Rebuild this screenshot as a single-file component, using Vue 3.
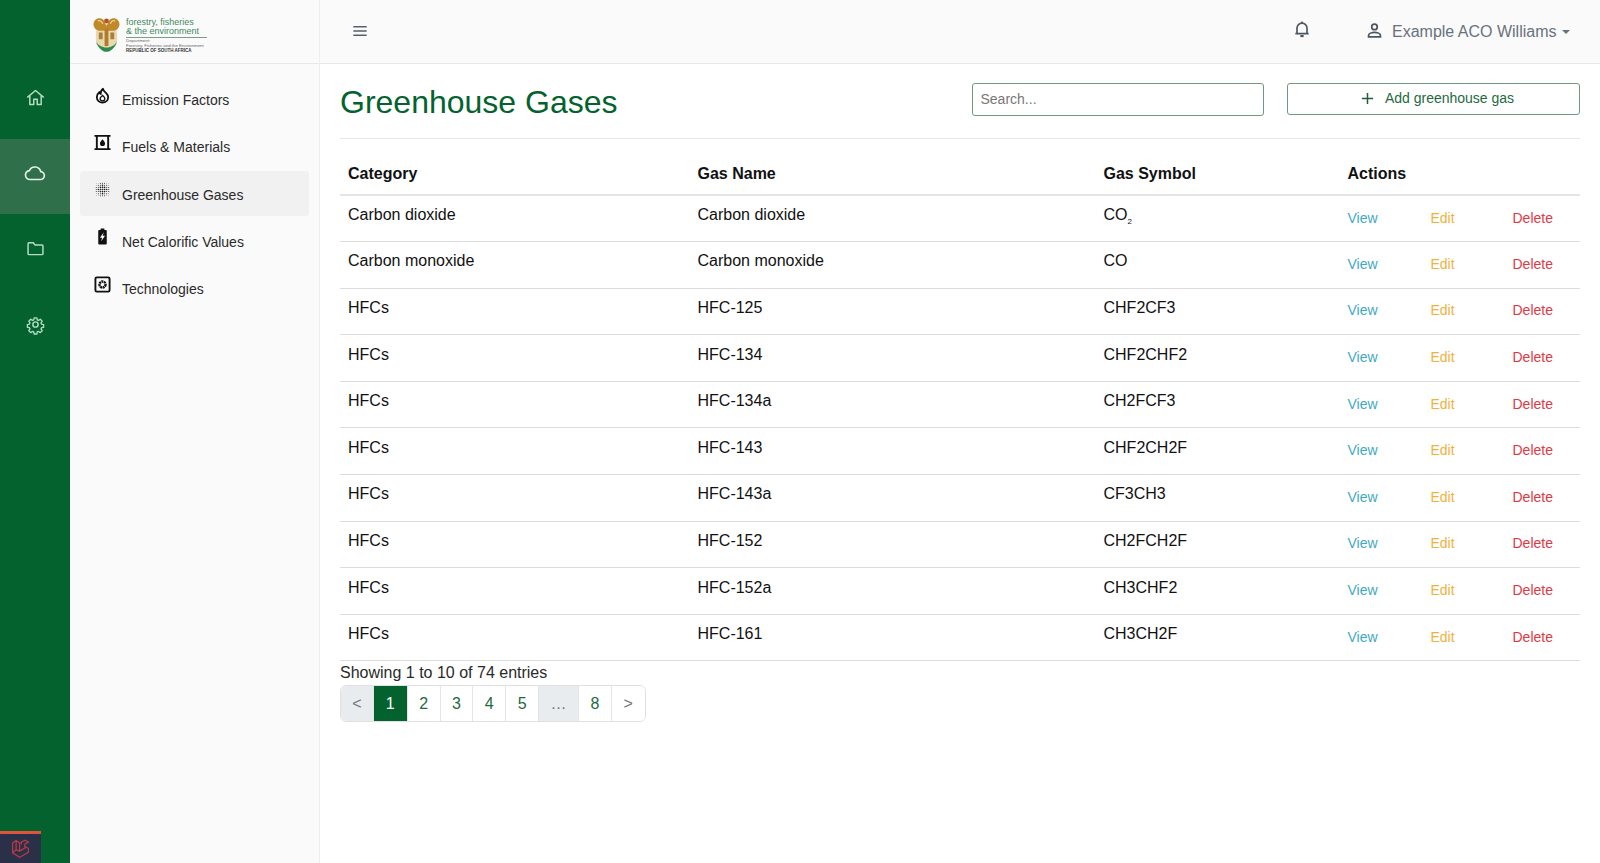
<script setup>
const railItems = [
  { name: 'home', active: false },
  { name: 'cloud', active: true },
  { name: 'folder', active: false },
  { name: 'gear', active: false }
]

const menu = [
  { label: 'Emission Factors', icon: 'flame' },
  { label: 'Fuels & Materials', icon: 'barrel' },
  { label: 'Greenhouse Gases', icon: 'dots', active: true },
  { label: 'Net Calorific Values', icon: 'battery' },
  { label: 'Technologies', icon: 'chip' }
]

const gases = [
  { category: 'Carbon dioxide', name: 'Carbon dioxide', symbol: 'CO', sub: '2' },
  { category: 'Carbon monoxide', name: 'Carbon monoxide', symbol: 'CO' },
  { category: 'HFCs', name: 'HFC-125', symbol: 'CHF2CF3' },
  { category: 'HFCs', name: 'HFC-134', symbol: 'CHF2CHF2' },
  { category: 'HFCs', name: 'HFC-134a', symbol: 'CH2FCF3' },
  { category: 'HFCs', name: 'HFC-143', symbol: 'CHF2CH2F' },
  { category: 'HFCs', name: 'HFC-143a', symbol: 'CF3CH3' },
  { category: 'HFCs', name: 'HFC-152', symbol: 'CH2FCH2F' },
  { category: 'HFCs', name: 'HFC-152a', symbol: 'CH3CHF2' },
  { category: 'HFCs', name: 'HFC-161', symbol: 'CH3CH2F' }
]

const pages = ['<', '1', '2', '3', '4', '5', '...', '8', '>']

// dot sizes for the greenhouse icon, bigger in the middle
const dots = []
for (let r = 0; r < 7; r++) {
  for (let c = 0; c < 7; c++) {
    const d = Math.abs(r - 3) + Math.abs(c - 3)
    dots.push({ x: 2.4 + c * 2.2, y: 2.4 + r * 2.2, r: d < 3 ? 0.85 : d < 5 ? 0.55 : 0.3 })
  }
}
</script>

<template>
  <div class="app">
    <aside class="rail">
      <div class="rail-top"></div>
      <a v-for="item in railItems" :key="item.name" class="rail-item" :class="{ active: item.active }">
        <svg viewBox="0 0 24 24" class="rail-icon">
          <path v-if="item.name === 'home'" d="M3 11.5 12 4l9 7.5M5.5 9.5V20h4.5v-6h4v6h4.500V9.500" />
          <path v-else-if="item.name === 'cloud'" d="M7 18.500a4.500 4.500 0 0 1-.6-8.960 6 6 0 0 1 11.300 1 3.980 3.980 0 0 1-.7 7.960z" />
          <path v-else-if="item.name === 'folder'" d="M3.500 6.500a1 1 0 0 1 1-1h5l2 2.500h8a1 1 0 0 1 1 1v9a1 1 0 0 1-1 1h-15a1 1 0 0 1-1-1z" />
          <template v-else>
            <circle cx="12" cy="12" r="3" />
            <path d="M10.300 3.500h3.400l.5 2.600 1.700.7 2.200-1.500 2.400 2.400-1.500 2.200.7 1.700 2.600.5v3.400l-2.600.5-.7 1.700 1.500 2.200-2.400 2.400-2.200-1.500-1.700.7-.5 2.600h-3.400l-.5-2.600-1.700-.7-2.200 1.500-2.400-2.400 1.500-2.200-.7-1.700-2.600-.5v-3.400l2.600-.5.7-1.700-1.500-2.200 2.400-2.400 2.200 1.500 1.700-.7z" transform="translate(1.200 1.200) scale(.9)" />
          </template>
        </svg>
      </a>
      <div class="debugbar">
        <svg viewBox="0 0 24 24" class="laravel">
          <path d="M3 5.500 7 3l4 2.500V15l6-3.500V7l4-2.300L17 2.500l-4 2.300V7M3 5.500V17l8 5 10-5.500v-4.500l-4-2.500M7 3v10.500L11 15M7 13.500 3 17" />
        </svg>
      </div>
    </aside>

    <nav class="sidebar">
      <div class="brand">
        <svg viewBox="0 0 28 38" class="crest">
          <path d="M.5 9C.5 2.500 7 0 11 4l3 6 3-6c4-4 10.500-1.500 10.500 5-1 5-4.500 6.500-7.500 7.500H8C5 15.500 1.500 14 .5 9z" fill="#c08a2a" />
          <path d="M5 5c2-1 4 0 5 3M23 5c-2-1-4 0-5 3" fill="none" stroke="#f0d58a" stroke-width="1.200" />
          <circle cx="14" cy="5" r="2.500" fill="#b5522a" />
          <path d="M3 15h22v10c0 6-6 10-11 10S3 31 3 25z" fill="#e9d9b0" />
          <path d="M12 13h4v18h-4z" fill="#b27a2c" />
          <path d="M6 17h4v7H6zM18 17h4v7h-4z" fill="#a9803a" />
          <path d="M3 26c2 7 7 11 11 11s9-4 11-11c-2 4-6 6.500-11 6.500S5 30 3 26z" fill="#2f8a4e" />
        </svg>
        <div class="brand-text">
          <div class="brand-title">forestry, fisheries<br />&amp; the environment</div>
          <div class="brand-sub">Department:<br />Forestry, Fisheries and the Environment</div>
          <div class="brand-country">REPUBLIC OF SOUTH AFRICA</div>
        </div>
      </div>
      <ul class="menu">
        <li v-for="item in menu" :key="item.label" class="menu-item" :class="{ active: item.active }">
          <svg viewBox="0 0 18 18" class="menu-icon">
            <g v-if="item.icon === 'flame'">
              <path d="M9.500 1.800c.3 2.300 1.700 3 3.200 4.500 1.500 1.500 2.300 3 2.300 4.600 0 3.300-2.700 5.500-6 5.500s-6-2.200-6-5.500c0-2.400 1.200-4.300 2.800-5.600.2 1.200.7 1.800 1.300 2.100C7 5.300 8 3 9.500 1.800z" fill="none" stroke="#111" stroke-width="1.900" stroke-linejoin="round" />
              <path d="M9 9c1.200 1.200 2.500 1.800 2.500 3.200a2.500 2.500 0 0 1-5 0C6.500 10.800 8 10.200 9 9z" fill="none" stroke="#111" stroke-width="1.400" />
            </g>
            <g v-else-if="item.icon === 'barrel'">
              <path d="M.5 1h17v2H16v12h1.500v2H.5v-2H2V3H.5zm3.500 2v12h10V3z" fill="#111" />
              <path d="M9 5.500c1.500 2 2.700 3 2.700 4.500a2.700 2.700 0 0 1-5.400 0C6.300 8.500 7.500 7.500 9 5.500z" fill="#111" />
            </g>
            <g v-else-if="item.icon === 'dots'">
              <circle v-for="(d, i) in dots" :key="i" :cx="d.x" :cy="d.y" :r="d.r" fill="#222" />
            </g>
            <g v-else-if="item.icon === 'battery'">
              <path d="M7 .5h4V2h1.500a1 1 0 0 1 1 1v13.500a1 1 0 0 1-1 1h-7a1 1 0 0 1-1-1V3a1 1 0 0 1 1-1H7z" fill="#111" />
              <path d="M10.300 4.500 6.300 10.300h2.300l-1 3.700 4.100-5.700H9.200z" fill="#fafafa" />
            </g>
            <g v-else>
              <rect x="1.500" y="1.500" width="15" height="15" rx="1.500" fill="none" stroke="#111" stroke-width="2" />
              <circle cx="9" cy="9" r="3.200" fill="none" stroke="#111" stroke-width="2.600" stroke-dasharray="2.100 .6" />
              <circle cx="9" cy="9" r=".9" fill="#fafafa" />
            </g>
          </svg>
          <span class="menu-label">{{ item.label }}</span>
        </li>
      </ul>
    </nav>

    <div class="main">
      <header class="topbar">
        <svg viewBox="0 0 24 24" class="burger"><path d="M4 7h16M4 12h16M4 17h16" /></svg>
        <div class="top-right">
          <svg viewBox="0 0 24 24" class="bell">
            <path d="M6 17V11a6 6 0 0 1 12 0v6M4 17.500h16M12 3v2" />
            <path d="M10 20.500h4" stroke-width="2.500" />
          </svg>
          <div class="user">
            <svg viewBox="0 0 24 24" class="person">
              <circle cx="12" cy="7.500" r="3.500" />
              <path d="M4.500 20v-1.500c0-2.500 4-4 7.500-4s7.500 1.500 7.500 4V20z" />
            </svg>
            <span>Example ACO Williams</span>
            <i class="caret"></i>
          </div>
        </div>
      </header>

      <section class="content">
        <div class="title-row">
          <h1>Greenhouse Gases</h1>
          <input class="search" type="text" placeholder="Search..." />
          <button class="add-btn">
            <svg viewBox="0 0 14 14" class="plus"><path d="M7 1v12M1 7h12" /></svg>
            Add greenhouse gas
          </button>
        </div>

        <table class="gas-table">
          <colgroup>
            <col class="c1" /><col class="c2" /><col class="c3" /><col class="c4" />
          </colgroup>
          <thead>
            <tr>
              <th>Category</th>
              <th>Gas Name</th>
              <th>Gas Symbol</th>
              <th>Actions</th>
            </tr>
          </thead>
          <tbody>
            <tr v-for="gas in gases" :key="gas.name">
              <td>{{ gas.category }}</td>
              <td>{{ gas.name }}</td>
              <td>{{ gas.symbol }}<sub v-if="gas.sub">{{ gas.sub }}</sub></td>
              <td>
                <div class="actions">
                  <a class="view">View</a>
                  <a class="edit">Edit</a>
                  <a class="delete">Delete</a>
                </div>
              </td>
            </tr>
          </tbody>
        </table>

        <div class="showing">Showing 1 to 10 of 74 entries</div>
        <div class="pager">
          <span
            v-for="p in pages"
            :key="p"
            class="page"
            :class="{ current: p === '1', muted: p === '<' || p === '...', dots: p === '...', arrow: p === '<' || p === '>' }"
          >{{ p === '...' ? '…' : p }}</span>
        </div>
      </section>
    </div>
  </div>
</template>

<style>
html, body {
  margin: 0;
  background: #fff;
}
</style>

<style scoped>
.app {
  display: flex;
  height: 863px;
  overflow: hidden;
  font-family: "Liberation Sans", Arial, sans-serif;
  color: #111;
}

.rail {
  position: relative;
  width: 70px;
  flex-shrink: 0;
  background: #04622f;
}
.rail-top {
  height: 63px;
}
.rail-item {
  display: flex;
  align-items: center;
  justify-content: center;
  height: 75.5px;
  box-sizing: border-box;
  padding-bottom: 6px;
}
.rail-item.active {
  background: #2f6f49;
}
.rail-icon {
  width: 21px;
  height: 21px;
  fill: none;
  stroke: #b5dcc2;
  stroke-width: 1.7;
  stroke-linejoin: round;
  stroke-linecap: round;
}
.rail-item.active .rail-icon {
  width: 24px;
  height: 24px;
  stroke: #e4f2e8;
}
.debugbar {
  position: absolute;
  left: 0;
  bottom: 0;
  width: 41px;
  height: 32px;
  box-sizing: border-box;
  background: #2a3048;
  border-top: 3px solid #e0533a;
  display: flex;
  align-items: center;
  justify-content: center;
}
.laravel {
  width: 21px;
  height: 21px;
  fill: none;
  stroke: #b23a48;
  stroke-width: 1.5;
}

.sidebar {
  width: 250px;
  flex-shrink: 0;
  background: #fafafa;
  border-right: 1px solid #eee;
  box-sizing: border-box;
}
.brand {
  height: 64px;
  box-sizing: border-box;
  border-bottom: 1px solid #e8e8e8;
  padding: 16px 0 0 23px;
  display: flex;
  gap: 6px;
}
.crest {
  width: 27px;
  height: 37px;
}
.brand-text {
  width: 81px;
  line-height: 1;
  padding-top: 2px;
}
.brand-title {
  font-size: 9px;
  line-height: 8.500px;
  color: #3f8a5f;
  white-space: nowrap;
  padding-bottom: 2px;
  border-bottom: 1px solid #7e9c8a;
}
.brand-sub {
  font-size: 4.400px;
  line-height: 5px;
  color: #666;
  white-space: nowrap;
}
.brand-country {
  font-size: 4.500px;
  line-height: 5px;
  font-weight: 700;
  color: #333;
  white-space: nowrap;
}
.menu {
  list-style: none;
  margin: 0;
  padding: 12.500px 10px 0;
}
.menu-item {
  display: flex;
  height: 44.500px;
  margin-bottom: 2.800px;
  padding: 0 0 0 14px;
  gap: 11px;
  border-radius: 3px;
}
.menu-item.active {
  background: #f1f1f1;
}
.menu-icon {
  width: 17px;
  height: 17px;
  margin-top: 10px;
  flex-shrink: 0;
}
.menu-label {
  font-size: 14px;
  line-height: 44px;
  color: #2a2a2a;
  margin-top: 1.500px;
}

.main {
  flex: 1;
  min-width: 0;
}
.topbar {
  height: 64px;
  box-sizing: border-box;
  background: #fafafa;
  border-bottom: 1px solid #e8e8e8;
  display: flex;
  align-items: center;
  justify-content: space-between;
  padding: 0 30px 0 30px;
}
.burger {
  width: 20px;
  height: 20px;
  fill: none;
  stroke: #55606a;
  stroke-width: 1.800;
  margin-top: -2px;
}
.top-right {
  display: flex;
  align-items: center;
  gap: 53px;
}
.bell {
  width: 20px;
  height: 20px;
  fill: none;
  stroke: #4c5560;
  stroke-width: 2;
  margin-top: -5px;
}
.user {
  display: flex;
  align-items: center;
  gap: 8px;
  font-size: 16px;
  color: #69727c;
}
.person {
  width: 19px;
  height: 19px;
  fill: none;
  stroke: #4c5560;
  stroke-width: 2.200;
  margin-top: -2px;
}
.caret {
  width: 0;
  height: 0;
  border-left: 4.500px solid transparent;
  border-right: 4.500px solid transparent;
  border-top: 4.500px solid #69727c;
  margin-left: -2.500px;
}

.content {
  padding: 19px 20px 0;
}
.title-row {
  display: flex;
  align-items: flex-start;
  height: 55px;
  border-bottom: 1px solid #e6e6e6;
}
h1 {
  margin: 0;
  flex: 1;
  font-size: 32px;
  font-weight: 400;
  line-height: 39px;
  color: #04622f;
}
.search {
  width: 292px;
  height: 33px;
  box-sizing: border-box;
  border: 1px solid #6d9a80;
  border-radius: 3px;
  padding: 0 8px 2px;
  font: 14px "Liberation Sans", Arial, sans-serif;
  outline: none;
}
.search::placeholder {
  color: #777;
}
.add-btn {
  width: 293px;
  height: 32px;
  margin-left: 23.500px;
  box-sizing: border-box;
  background: #fff;
  border: 1px solid #6d9a80;
  border-radius: 3px;
  font: 14px "Liberation Sans", Arial, sans-serif;
  color: #1f6a3e;
  display: flex;
  align-items: center;
  justify-content: center;
  gap: 11px;
  padding: 0 0 2px 8px;
}
.plus {
  width: 13px;
  height: 13px;
  fill: none;
  stroke: #1f5e39;
  stroke-width: 1.600;
  margin-top: 1px;
}

.gas-table {
  width: 100%;
  table-layout: fixed;
  border-collapse: collapse;
  font-size: 16px;
}
.c1 { width: 349.5px; }
.c2 { width: 406px; }
.c3 { width: 244px; }
th {
  height: 56px;
  padding: 15px 8px 0;
  box-sizing: border-box;
  text-align: left;
  font-weight: 700;
  color: #111;
  border-bottom: 2px solid #e4e4e4;
}
td {
  height: 46.600px;
  padding: 0 8px 7px;
  box-sizing: border-box;
  border-bottom: 1px solid #dcdcdc;
  color: #111;
}
td sub {
  font-size: 8px;
  line-height: 0;
}
.actions {
  display: flex;
  font-size: 14px;
  padding-top: 5px;
}
.actions a {
  display: block;
}
.view { width: 83px; color: #3fa9c5; }
.edit { width: 82px; color: #f1b23c; }
.delete { color: #e23744; }

.showing {
  font-size: 16px;
  line-height: 24px;
  color: #2a2a2a;
}
.pager {
  display: inline-flex;
  height: 37px;
  border: 1px solid #e0e0e0;
  border-radius: 6px;
  overflow: hidden;
  box-sizing: border-box;
}
.page {
  width: 32.800px;
  display: flex;
  align-items: center;
  justify-content: center;
  font-size: 16px;
  color: #1f6a3e;
  background: #fff;
  border-right: 1px solid #e4e4e4;
  box-sizing: border-box;
}
.page:last-child {
  border-right: 0;
}
.page.muted {
  background: #e9ecef;
  color: #6c757d;
}
.page.arrow {
  color: #6c757d;
}
.page.dots {
  width: 40px;
}
.page.current {
  background: #04622f;
  color: #fff;
  width: 34px;
}
</style>
